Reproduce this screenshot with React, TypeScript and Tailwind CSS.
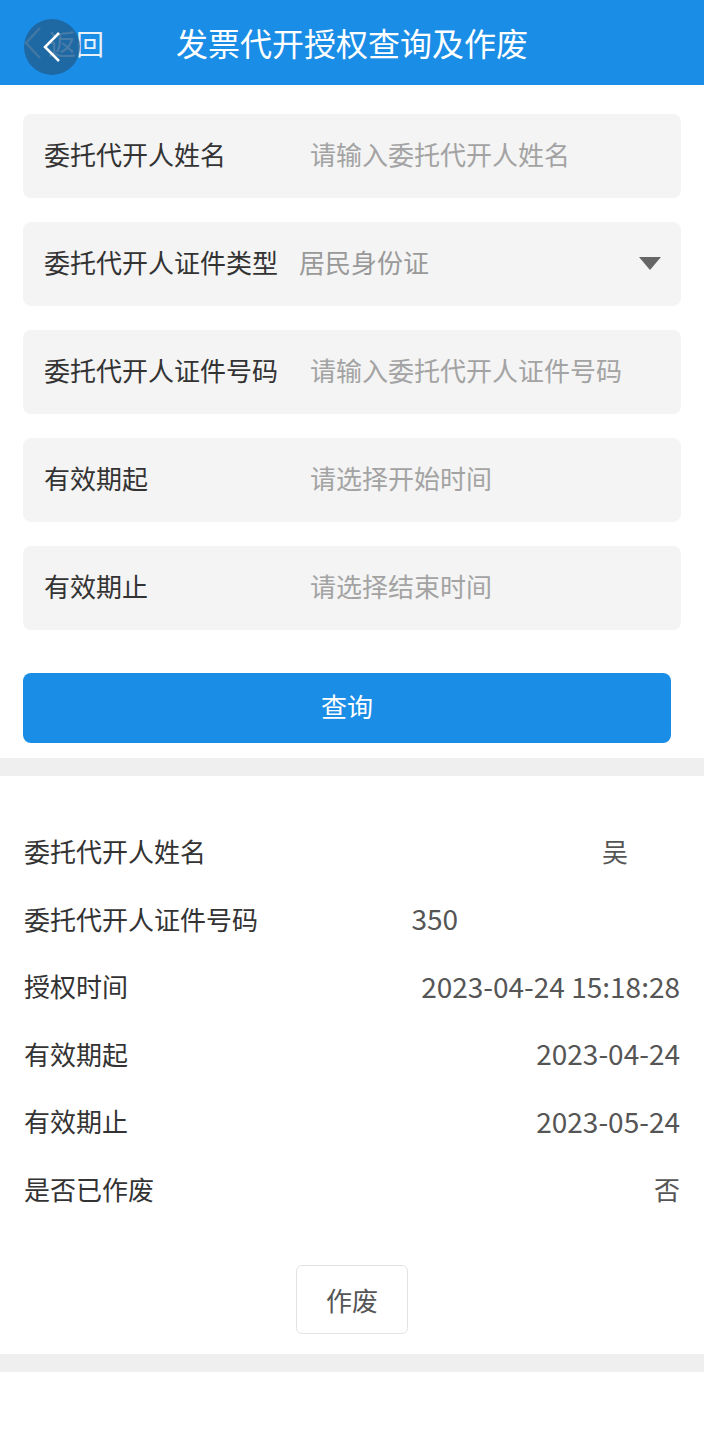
import React from "react";

const font = { fontFamily: '"Noto Sans CJK SC", "Noto Sans", sans-serif' };

const fields = [
  { label: "委托代开人姓名", placeholder: "请输入委托代开人姓名" },
  { label: "委托代开人证件类型", value: "居民身份证", select: true },
  { label: "委托代开人证件号码", placeholder: "请输入委托代开人证件号码" },
  { label: "有效期起", placeholder: "请选择开始时间" },
  { label: "有效期止", placeholder: "请选择结束时间" },
];

function Header() {
  return (
    <div className="relative h-[85px] bg-[#1a8de6] flex items-center justify-center">
      <div className="absolute left-[22px] top-0 h-full flex items-center">
        <svg width="22" height="34" viewBox="0 0 22 34" className="mr-[4px]">
          <path d="M18 2 L4 17 L18 32" fill="none" stroke="#c9d6e2" strokeWidth="2.5" />
        </svg>
        <span className="text-[28px] text-[#e8f0f8]">返回</span>
      </div>
      <div className="absolute left-[24px] top-[19px] w-[56px] h-[56px] rounded-full bg-[#1f5f94]/80 flex items-center justify-center">
        <svg width="22" height="32" viewBox="0 0 22 32">
          <path d="M18 2 L4 16 L18 30" fill="none" stroke="#ffffff" strokeWidth="2.5" />
        </svg>
      </div>
      <h1 className="text-[32px] text-white pb-[2px]">发票代开授权查询及作废</h1>
    </div>
  );
}

function Field({ f }: { f: (typeof fields)[number] }) {
  return (
    <div className="relative h-[84px] rounded-[8px] bg-[#f4f4f4] flex items-center pl-[21px] pr-[20px]">
      <span className="text-[26px] text-[#333] pb-[5px]">{f.label}</span>
      {f.select ? (
        <>
          <span className="ml-[21px] text-[26px] text-[#999] flex-1 pb-[5px]">{f.value}</span>
          <svg width="22" height="14" viewBox="0 0 22 14">
            <path d="M0 0 H22 L11 13 Z" fill="#666" />
          </svg>
        </>
      ) : (
        <span className="absolute left-[287px] text-[26px] text-[#a3a3a3] pb-[5px]">{f.placeholder}</span>
      )}
    </div>
  );
}

const num = "text-[28px]";

const rows: { label: string; value: React.ReactNode }[] = [
  {
    label: "委托代开人姓名",
    value: (
      <span className="flex items-center text-[26px]">
        吴<span className="inline-block w-[52px]" />
      </span>
    ),
  },
  {
    label: "委托代开人证件号码",
    value: (
      <span className="flex items-center text-[28px]">
        350<span className="inline-block w-[222px]" />
      </span>
    ),
  },
  { label: "授权时间", value: <span className={num}>2023-04-24 15:18:28</span> },
  { label: "有效期起", value: <span className={num}>2023-04-24</span> },
  { label: "有效期止", value: <span className={num}>2023-05-24</span> },
  { label: "是否已作废", value: <span className="text-[26px]">否</span> },
];

export default function App() {
  return (
    <div className="w-[704px] min-h-[1444px] bg-white" style={font}>
      <Header />
      <div className="px-[23px] pt-[29px] flex flex-col gap-[24px]">
        {fields.map((f) => (
          <Field key={f.label} f={f} />
        ))}
      </div>
      <div className="px-[23px] pr-[33px] pt-[43px] pb-[15px]">
        <button className="w-full h-[70px] rounded-[8px] bg-[#1a8de6] text-white text-[26px] pb-[5px]">
          查询
        </button>
      </div>
      <div className="h-[18px] bg-[#efefef]" />
      <div className="pt-[41px] px-[24px]">
        {rows.map((r) => (
          <div key={r.label} className="h-[67.5px] flex items-center justify-between">
            <span className="text-[26px] text-[#333]">{r.label}</span>
            <span className="text-[#555]">{r.value}</span>
          </div>
        ))}
      </div>
      <div className="flex justify-center mt-[43px] mb-[20px]">
        <button className="w-[112px] h-[69px] rounded-[6px] border border-[#e3e3e3] bg-white text-[26px] text-[#555]">
          作废
        </button>
      </div>
      <div className="h-[18px] bg-[#efefef]" />
    </div>
  );
}
